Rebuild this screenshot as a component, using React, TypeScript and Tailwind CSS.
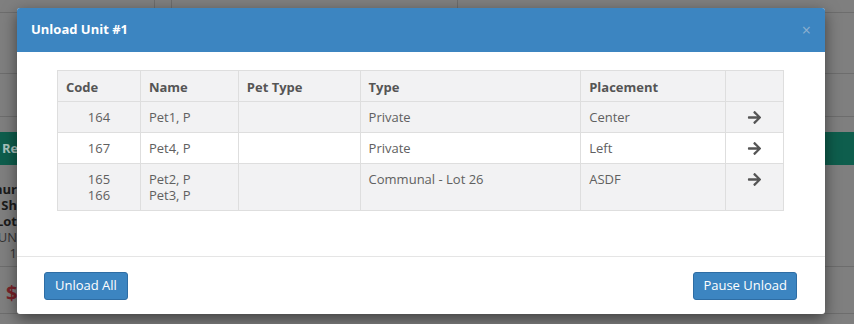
import React from "react";
import { FaArrowRight } from "react-icons/fa";

type Row = {
  codes: string[];
  names: string[];
  petType: string;
  type: string;
  placement: string;
};

const rows: Row[] = [
  { codes: ["164"], names: ["Pet1, P"], petType: "", type: "Private", placement: "Center" },
  { codes: ["167"], names: ["Pet4, P"], petType: "", type: "Private", placement: "Left" },
  { codes: ["165", "166"], names: ["Pet2, P", "Pet3, P"], petType: "", type: "Communal - Lot 26", placement: "ASDF" },
];

const font = { fontFamily: '"Open Sans", "Noto Sans", sans-serif' };

const Backdrop = () => {
  return (
    <div className="flex h-[324px] w-[854px] flex-col overflow-hidden bg-[#7f7f7f] text-[13px]" style={font}>
      <div className="flex h-[13px] border-b border-[#6d6d6d]">
        <div className="w-[155px] border-r border-[#6d6d6d]" />
        <div className="w-[17px] border-r border-[#6d6d6d]" />
        <div className="w-[286px] border-r border-[#6d6d6d]" />
      </div>
      <div className="h-[61px] border-b border-[#6d6d6d]" />
      <div className="h-[43px] border-b border-[#6d6d6d]" />
      <div className="mt-[15px] flex h-[33px] items-center bg-[#0e5e4d] pl-[2px] font-bold text-[#a9c3bd]">
        Re
      </div>
      <div className="mt-[16px] flex w-[17px] flex-col items-end overflow-hidden whitespace-nowrap leading-[16px] text-[#1a1a1a]">
        <span className="font-bold">nur</span>
        <span className="font-bold">Sh</span>
        <span className="font-bold">Lot</span>
        <span className="text-[#333]">UN</span>
        <span className="text-[#333]">1</span>
      </div>
      <div className="mt-[5px] border-b border-[#6d6d6d]" />
      <div className="mt-[14px] pl-[6px] text-[20px] font-bold leading-[24px] text-[#7a2329]">$</div>
      <div className="mt-[8px] border-b border-[#6d6d6d]" />
    </div>
  );
};

const cell = "border border-[#dedede] px-[8px] py-[7px] align-top leading-[16px]";

const Modal = () => {
  return (
    <div
      className="absolute left-[17px] top-[8px] flex h-[306px] w-[808px] flex-col overflow-hidden rounded-[3px] bg-white shadow-[0_5px_15px_rgba(0,0,0,0.5)]"
      style={font}
    >
      <div className="flex h-[44px] items-center justify-between bg-[#3c85c1] px-[14px]">
        <span className="text-[13px] font-bold text-white">Unload Unit #1</span>
        <span className="text-[16px] leading-none text-[#8db0cf]">×</span>
      </div>

      <div className="flex-1 px-[40px] pt-[18px]">
        <table className="w-[727px] border-collapse text-[13px] text-[#606060]">
          <colgroup>
            <col className="w-[83px]" />
            <col className="w-[98px]" />
            <col className="w-[122px]" />
            <col className="w-[221px]" />
            <col className="w-[145px]" />
            <col className="w-[58px]" />
          </colgroup>
          <thead>
            <tr className="bg-[#f2f2f3]">
              {["Code", "Name", "Pet Type", "Type", "Placement", ""].map((h, i) => (
                <th key={i} className={`${cell} pt-[8px] pb-[6px] text-left font-bold text-[#555]`}>
                  {h}
                </th>
              ))}
            </tr>
          </thead>
          <tbody>
            {rows.map((r, i) => (
              <tr key={i} className={i % 2 === 0 ? "bg-[#f2f2f3]" : "bg-white"}>
                <td className={`${cell} text-center`}>
                  {r.codes.map((c) => (
                    <div key={c}>{c}</div>
                  ))}
                </td>
                <td className={cell}>
                  {r.names.map((n) => (
                    <div key={n}>{n}</div>
                  ))}
                </td>
                <td className={cell}>{r.petType}</td>
                <td className={cell}>{r.type}</td>
                <td className={cell}>{r.placement}</td>
                <td className={cell}>
                  <div className="flex h-[16px] items-center justify-center">
                    <FaArrowRight className="h-[15px] w-[15px] text-[#555]" />
                  </div>
                </td>
              </tr>
            ))}
          </tbody>
        </table>
      </div>

      <div className="flex h-[58px] items-center justify-between border-t border-[#e5e5e5] pl-[27px] pr-[28px]">
        <button className="h-[28px] rounded-[3px] border border-[#2e6da4] bg-[#3c85c1] px-[10px] text-[13px] text-white">
          Unload All
        </button>
        <button className="h-[28px] rounded-[3px] border border-[#2e6da4] bg-[#3c85c1] px-[9px] text-[13px] text-white">
          Pause Unload
        </button>
      </div>
    </div>
  );
};

const App = () => {
  return (
    <div className="relative h-[324px] w-[854px] overflow-hidden">
      <Backdrop />
      <Modal />
    </div>
  );
};

export default App;
